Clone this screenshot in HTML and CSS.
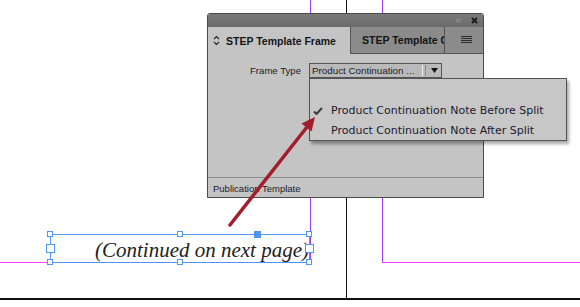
FILE: index.html
```html
<!DOCTYPE html>
<html lang="en">
<head>
  <meta charset="UTF-8">
  <title>STEP Template Frame</title>
  <link rel="stylesheet" href="styles.css">
</head>
<body>

  <div class="canvas">
    <!-- Guias da pagina -->
    <div class="guide spine"></div>
    <div class="guide page-edge"></div>
    <div class="guide column col-a"></div>
    <div class="guide column col-b"></div>
    <div class="guide margin margin-a"></div>
    <div class="guide margin margin-b"></div>

    <!-- Quadro de texto selecionado -->
    <div class="text-frame">
      <span class="frame-text">(Continued on next page)</span>
      <span class="handle h-tl"></span>
      <span class="handle h-tr"></span>
      <span class="handle h-bl"></span>
      <span class="handle h-br"></span>
      <span class="handle h-mt"></span>
      <span class="handle h-mb"></span>
      <span class="handle side h-ml"></span>
      <span class="handle side h-mr"></span>
      <span class="handle filled h-port"></span>
    </div>

    <!-- Painel -->
    <div class="panel">
      <div class="titlebar">
        <svg class="tb-collapse" width="7" height="5" viewBox="0 0 7 5">
          <path d="M3 0.5 L1 2.5 L3 4.5 M6 0.5 L4 2.5 L6 4.5" fill="none" stroke="#a9a9a9" stroke-width="1"/>
        </svg>
        <svg class="tb-close" width="7" height="7" viewBox="0 0 7 7">
          <path d="M1 1 L6 6 M6 1 L1 6" stroke="#1e1e1e" stroke-width="2"/>
        </svg>
      </div>

      <div class="tabs">
        <div class="tab active">
          <svg class="tab-icon" width="7" height="11" viewBox="0 0 7 11">
            <path d="M1 4 L3.5 1.5 L6 4 M1 7 L3.5 9.5 L6 7" fill="none" stroke="#222" stroke-width="1.1"/>
          </svg>
          STEP Template Frame
        </div>
        <div class="tab">STEP Template Content</div>
        <div class="tab-menu">
          <svg width="11" height="8" viewBox="0 0 11 8">
            <path d="M0 0.5 H11 M0 2.5 H11 M0 4.5 H11 M0 6.5 H11" stroke="#2a2a2a" stroke-width="1"/>
          </svg>
        </div>
      </div>

      <div class="panel-body">
        <div class="field">
          <label class="field-label">Frame Type</label>
          <div class="select">
            <span class="select-value">Product Continuation ...</span>
            <span class="select-grip"></span>
            <svg class="select-arrow" width="7" height="5" viewBox="0 0 7 5">
              <path d="M0 0 H7 L3.5 5 Z" fill="#111"/>
            </svg>
          </div>
        </div>
      </div>

      <div class="status">Publication Template</div>
    </div>

    <!-- Lista aberta do Frame Type -->
    <ul class="dropdown">
      <li class="item"></li>
      <li class="item">
        <svg class="check" width="10" height="8" viewBox="0 0 10 8">
          <path d="M1 4.5 L3.5 7 L9 1" fill="none" stroke="#3a3a3a" stroke-width="2"/>
        </svg>
        Product Continuation Note Before Split
      </li>
      <li class="item">Product Continuation Note After Split</li>
    </ul>

    <!-- Seta vermelha -->
    <svg class="arrow" width="580" height="307" viewBox="0 0 580 307">
      <line x1="230" y1="225" x2="307" y2="127" stroke="#a31e2b" stroke-width="3.5" stroke-linecap="round"/>
      <polygon points="315,117 311.5,131.5 301.5,123.5" fill="#a31e2b"/>
    </svg>
  </div>

</body>
</html>
```

FILE: styles.css
```css
body {
  margin: 0;
  padding: 0;
  background: #fff;
  font-family: "Liberation Sans", Arial, sans-serif;
}

.canvas {
  position: relative;
  width: 580px;
  height: 307px;
  overflow: hidden;
  background: #fff;
}

/* Guias */
.guide {
  position: absolute;
}

.spine {
  left: 346px;
  top: 0;
  width: 1px;
  height: 298px;
  background: #111;
}

.page-edge {
  left: 0;
  top: 298px;
  width: 580px;
  height: 2px;
  background: #111;
}

.column {
  top: 0;
  width: 1px;
  height: 263px;
  background: #a43cff;
}

.col-a { left: 310px; }
.col-b { left: 382px; }

.margin {
  top: 262px;
  height: 1px;
  background: #ff3cff;
}

.margin-a { left: 0; width: 311px; }
.margin-b { left: 382px; width: 198px; }

/* Quadro de texto */
.text-frame {
  position: absolute;
  left: 50px;
  top: 234px;
  width: 260px;
  height: 29px;
  box-sizing: border-box;
  border: 1px solid #4f95f2;
  display: flex;
  justify-content: flex-end;
  background: #fff;
}

.frame-text {
  font-family: "Liberation Serif", "Times New Roman", serif;
  font-style: italic;
  font-size: 21px;
  line-height: 28px;
  padding-top: 1px;
  color: #222;
  white-space: nowrap;
}

.handle {
  position: absolute;
  width: 6px;
  height: 6px;
  box-sizing: border-box;
  border: 1px solid #4f95f2;
  background: #fff;
}

.handle.side {
  width: 9px;
  height: 9px;
}

.handle.filled {
  width: 7px;
  height: 7px;
  background: #4f95f2;
}

.h-tl { left: -4px; top: -4px; }
.h-tr { left: 255px; top: -4px; }
.h-bl { left: -4px; top: 24px; }
.h-br { left: 255px; top: 24px; }
.h-mt { left: 126px; top: -4px; }
.h-mb { left: 126px; top: 24px; }
.h-ml { left: -5px; top: 9px; }
.h-mr { left: 254px; top: 9px; }
.h-port { left: 203px; top: -4px; }

/* Painel */
.panel {
  position: absolute;
  left: 207px;
  top: 13px;
  width: 277px;
  height: 185px;
  box-sizing: border-box;
  border: 1px solid #4b4b4b;
  border-radius: 3px 3px 0 0;
  background: #c4c4c4;
  display: flex;
  flex-direction: column;
}

.titlebar {
  height: 13px;
  background: linear-gradient(#7a7a7a, #6a6a6a);
  border-radius: 2px 2px 0 0;
  display: flex;
  justify-content: flex-end;
  align-items: center;
  gap: 9px;
  padding-right: 5px;
}

.tabs {
  height: 27px;
  display: flex;
  background: #8b8b8b;
  font-weight: bold;
  font-size: 10.5px;
  color: #141414;
}

.tab {
  width: 94px;
  box-sizing: border-box;
  padding-left: 11px;
  display: flex;
  align-items: center;
  white-space: nowrap;
  overflow: hidden;
  border-left: 1px solid #555;
  border-bottom: 1px solid #555;
}

.tab.active {
  width: 142px;
  padding-left: 5px;
  border-left: none;
  border-bottom: none;
  background: #c4c4c4;
  gap: 6px;
}

.tab-menu {
  flex: 1;
  display: flex;
  align-items: center;
  justify-content: center;
  padding-left: 5px;
  border-left: 1px solid #555;
  border-bottom: 1px solid #555;
}

.panel-body {
  flex: 1;
  padding-top: 9px;
}

.field {
  display: flex;
  align-items: center;
  gap: 8px;
}

.field-label {
  width: 93px;
  text-align: right;
  font-size: 9.6px;
  color: #1a1a2a;
}

.select {
  width: 133px;
  height: 15px;
  box-sizing: border-box;
  border: 1px solid #555;
  background: #bababa;
  display: flex;
  align-items: center;
  padding-left: 2px;
  font-size: 9.8px;
  color: #1a1a2a;
}

.select-value {
  flex: 1;
  white-space: nowrap;
  overflow: hidden;
}

.select-grip {
  width: 2px;
  height: 11px;
  border-left: 1px solid #f0f0f0;
  border-right: 1px solid #8a8a8a;
  margin-right: 5px;
}

.select-arrow {
  margin-right: 3px;
}

.status {
  height: 19px;
  border-top: 1px solid #8c8c8c;
  padding-left: 5px;
  font-size: 9.5px;
  line-height: 22px;
  color: #1a1a2a;
}

/* Lista do dropdown */
.dropdown {
  position: absolute;
  left: 309px;
  top: 78px;
  width: 258px;
  margin: 0;
  padding: 0;
  list-style: none;
  box-sizing: border-box;
  border: 1px solid #555;
  background: #c7c7c7;
  box-shadow: 2px 3px 3px rgba(0, 0, 0, 0.35);
  font-family: "DejaVu Sans", Verdana, sans-serif;
  font-size: 11px;
  color: #1a1a30;
}

.item {
  position: relative;
  height: 20px;
  line-height: 22px;
  padding-left: 21px;
  white-space: nowrap;
}

.item:first-child {
  height: 21px;
}

.check {
  position: absolute;
  left: 3px;
  top: 7px;
}

.arrow {
  position: absolute;
  left: 0;
  top: 0;
  pointer-events: none;
}
```
